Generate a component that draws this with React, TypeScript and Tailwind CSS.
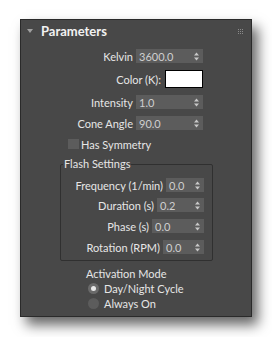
import React from 'react'

const Spinner = ({ value, w }: { value: string; w: string }) => {
    return (
        <div className={`${w} h-[14px] bg-[#5c5c5c] flex items-center justify-between pl-[3px] pr-[4px]`}>
            <span className="text-[#cfcfcf] leading-none">{value}</span>
            <svg width="5" height="9" viewBox="0 0 5 9" className="shrink-0">
                <path d="M2.5 0.5 L5 3.5 L0 3.5 Z" fill="#c8c8c8" />
                <path d="M0 5.5 L5 5.5 L2.5 8.5 Z" fill="#c8c8c8" />
            </svg>
        </div>
    )
}

const Row = ({ label, children, className }: { label: string; children: React.ReactNode; className: string }) => {
    return (
        <div className={`flex items-center justify-end gap-[3px] ${className}`}>
            <span className="text-[#e6e6e6] leading-none">{label}</span>
            {children}
        </div>
    )
}

const App = () => {
    return (
        <div className="w-[272px] h-[337px] bg-white pt-[19px] pl-[20px]" style={{ fontFamily: 'Lato, "Noto Sans", sans-serif' }}>
            <div className="w-[232px] h-[298px] bg-[#484848] border border-[#2a2a2a] shadow-[6px_8px_12px_rgba(0,0,0,0.6)] text-[11px] flex flex-col">
                {/* header */}
                <div className="h-[22px] flex items-center px-[6px] shrink-0">
                    <svg width="6" height="4" viewBox="0 0 6 4" className="mr-[8px]">
                        <path d="M0 0 L6 0 L3 4 Z" fill="#a0a0a0" />
                    </svg>
                    <span className="font-bold text-[13px] text-[#f2f2f2] leading-none">Parameters</span>
                    <div className="ml-auto mr-[2px] grid grid-cols-3 gap-[1px]">
                        {Array.from({ length: 9 }).map((_, i) => (
                            <div key={i} className="w-[1px] h-[1px] bg-[#8a8a8a]" />
                        ))}
                    </div>
                </div>

                <div className="flex flex-col pr-[48px]">
                    <Row label="Kelvin" className="h-[14px] mt-[7px]">
                        <Spinner value="3600.0" w="w-[67px]" />
                    </Row>
                    <Row label="Color (K):" className="h-[18px] mt-[7px]">
                        <div className="w-[38px] h-[18px] bg-white border border-black ml-[1px]" />
                    </Row>
                    <Row label="Intensity" className="h-[14px] mt-[7px]">
                        <Spinner value="1.0" w="w-[67px]" />
                    </Row>
                    <Row label="Cone Angle" className="h-[14px] mt-[7px]">
                        <Spinner value="90.0" w="w-[67px]" />
                    </Row>
                </div>

                <div className="flex items-center h-[10px] mt-[9px] pl-[47px] gap-[2px]">
                    <div className="w-[11px] h-[10px] bg-[#5c5c5c]" />
                    <span className="text-[#e6e6e6] leading-none">Has Symmetry</span>
                </div>

                {/* flash settings group */}
                <div className="relative ml-[39px] mt-[15px] w-[153px] h-[97px] border border-[#303030] rounded-[2px] flex flex-col pr-[8px]">
                    <span className="absolute -top-[7px] left-[2px] px-[1px] bg-[#484848] text-[#e6e6e6] leading-none">Flash Settings</span>
                    <Row label="Frequency (1/min)" className="h-[14px] mt-[13px]">
                        <Spinner value="0.0" w="w-[38px]" />
                    </Row>
                    <Row label="Duration (s)" className="h-[14px] mt-[6px]">
                        <Spinner value="0.2" w="w-[47px]" />
                    </Row>
                    <Row label="Phase (s)" className="h-[14px] mt-[7px]">
                        <Spinner value="0.0" w="w-[52px]" />
                    </Row>
                    <Row label="Rotation (RPM)" className="h-[14px] mt-[7px]">
                        <Spinner value="0.0" w="w-[41px]" />
                    </Row>
                </div>

                {/* activation mode */}
                <div className="pl-[65px] mt-[7px] flex flex-col">
                    <span className="text-[#e6e6e6] leading-none h-[12px]">Activation Mode</span>
                    <div className="flex items-center h-[11px] mt-[3px] gap-[5px] pl-[2px]">
                        <div className="w-[11px] h-[11px] rounded-full bg-[#6a6a6a] flex items-center justify-center">
                            <div className="w-[5px] h-[5px] rounded-full bg-[#e8e8e8]" />
                        </div>
                        <span className="text-[#e6e6e6] leading-none">Day/Night Cycle</span>
                    </div>
                    <div className="flex items-center h-[11px] mt-[4px] gap-[5px] pl-[2px]">
                        <div className="w-[11px] h-[11px] rounded-full bg-[#5c5c5c]" />
                        <span className="text-[#e6e6e6] leading-none">Always On</span>
                    </div>
                </div>
            </div>
        </div>
    )
}

export default App
